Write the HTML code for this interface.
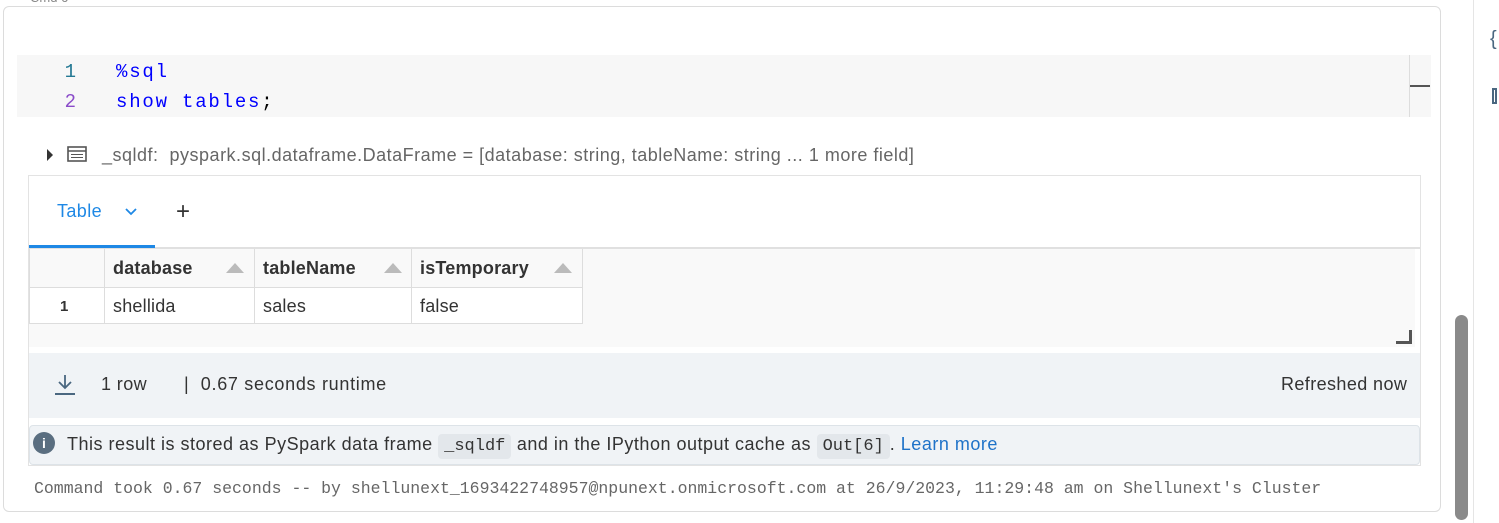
<!DOCTYPE html>
<html><head><meta charset="utf-8"><style>
*{margin:0;padding:0;box-sizing:border-box}
body{width:1499px;height:523px;background:#fff;position:relative;overflow:hidden;font-family:"Liberation Sans",sans-serif;color:#333}
.a{position:absolute}
.mono{font-family:"Liberation Mono",monospace;letter-spacing:0}
.cell{left:3px;top:6px;width:1438px;height:506px;border:1px solid #dcdcdc;border-radius:6px}
.code{left:17px;top:55px;width:1414px;height:62px;background:#f7f7f7}
.ln{font-size:19px;width:20px;text-align:right}
.ct{font-size:19px;letter-spacing:1.8px;color:#0000ff}
.res{left:28px;top:175px;width:1393px;height:291px;border:1px solid #e3e3e3}
.hc{position:absolute;top:249px;height:38px;border-right:1px solid #ddd;font-weight:bold;color:#333;font-size:18px;line-height:38px;padding-left:8px;letter-spacing:0.2px}
.rc{position:absolute;top:287px;height:37px;border-right:1px solid #ddd;border-top:1px solid #ddd;border-bottom:1px solid #ddd;font-size:18px;line-height:37px;padding-left:8px;background:#fff;color:#333;letter-spacing:0.2px}
.tri{position:absolute;top:14px;width:0;height:0;border-left:9px solid transparent;border-right:9px solid transparent;border-bottom:10px solid #bbb}
.s{letter-spacing:0.4px}
</style></head><body>
<div class="a" style="left:30px;top:-10px;font-size:13px;color:#888">Cmd 6</div>
<div class="a cell"></div>
<div class="a code"></div>
<div class="a" style="left:1409px;top:55px;width:1px;height:62px;background:#ddd"></div>
<div class="a" style="left:1410px;top:85px;width:20px;height:2px;background:#555"></div>
<div class="a mono ln" style="left:56px;top:61px;color:#237893">1</div>
<div class="a mono ln" style="left:56px;top:91px;color:#8a4bc9">2</div>
<div class="a mono ct" style="left:116px;top:61px;letter-spacing:1.8px">%sql</div>
<div class="a mono ct" style="left:116px;top:91px;letter-spacing:1.8px">show tables<span style="color:#000">;</span></div>

<div class="a" style="left:47px;top:149px;width:0;height:0;border-top:6px solid transparent;border-bottom:6px solid transparent;border-left:6px solid #333"></div>
<svg class="a" style="left:67px;top:146px" width="20" height="16"><rect x="1" y="1" width="18" height="14" fill="none" stroke="#555" stroke-width="1.6"/><line x1="1" y1="5" x2="19" y2="5" stroke="#555" stroke-width="1.6"/><line x1="4" y1="8.5" x2="16" y2="8.5" stroke="#555"/><line x1="4" y1="11.5" x2="16" y2="11.5" stroke="#555"/></svg>
<div class="a" style="left:102px;top:145px;font-size:18px;color:#666;white-space:nowrap;letter-spacing:0.5px">_sqldf:&nbsp; pyspark.sql.dataframe.DataFrame = [database: string, tableName: string ... 1 more field]</div>

<div class="a res"></div>
<div class="a s" style="left:57px;top:201px;font-size:18px;color:#1e88e5">Table</div>
<svg class="a" style="left:124px;top:207px" width="14" height="10"><path d="M2 2 L7 7 L12 2" fill="none" stroke="#1e88e5" stroke-width="1.8"/></svg>
<div class="a" style="left:176px;top:198px;font-size:24px;color:#333">+</div>
<div class="a" style="left:29px;top:247px;width:1391px;height:2px;background:#e0e0e0"></div>
<div class="a" style="left:29px;top:245px;width:126px;height:3px;background:#1e88e5"></div>
<div class="a" style="left:29px;top:249px;width:1386px;height:98px;background:#f9f9f9"></div>
<div class="hc" style="left:29px;width:76px;border-left:1px solid #ddd"></div>
<div class="hc" style="left:105px;width:150px">database<div class="tri" style="left:121px"></div></div>
<div class="hc" style="left:255px;width:157px">tableName<div class="tri" style="left:129px"></div></div>
<div class="hc" style="left:412px;width:171px">isTemporary<div class="tri" style="left:142px"></div></div>
<div class="rc" style="left:29px;width:76px;border-left:1px solid #ddd;font-weight:bold;font-size:15px;padding-left:30px">1</div>
<div class="rc" style="left:105px;width:150px">shellida</div>
<div class="rc" style="left:255px;width:157px">sales</div>
<div class="rc" style="left:412px;width:171px">false</div>
<div class="a" style="left:1396px;top:330px;width:16px;height:14px;border-right:3px solid #555;border-bottom:3px solid #555"></div>

<div class="a" style="left:29px;top:353px;width:1391px;height:65px;background:#f0f3f6"></div>
<svg class="a" style="left:54px;top:373px" width="22" height="24"><path d="M11 2 V15 M5 9 L11 15 L17 9" fill="none" stroke="#4a6780" stroke-width="1.8"/><line x1="1" y1="21" x2="21" y2="21" stroke="#4a6780" stroke-width="2"/></svg>
<div class="a s" style="left:101px;top:374px;font-size:18px;color:#333">1 row</div>
<div class="a s" style="left:184px;top:374px;font-size:18px;color:#333;letter-spacing:0.7px">|&nbsp; 0.67 seconds runtime</div>
<div class="a s" style="left:1281px;top:374px;font-size:18px;color:#333">Refreshed now</div>

<div class="a" style="left:29px;top:425px;width:1391px;height:40px;background:#f0f3f6;border:1px solid #dde3e8;border-radius:4px"></div>
<div class="a" style="left:33px;top:432px;width:22px;height:22px;border-radius:50%;background:#5a6e80;color:#fff;font-size:14px;font-weight:bold;text-align:center;line-height:22px">i</div>
<div class="a" style="left:67px;top:434px;font-size:18px;color:#333;white-space:nowrap;letter-spacing:0.5px">This result is stored as PySpark data frame <span class="mono" style="background:#e3e7eb;padding:3px 6px;border-radius:4px;font-size:17px">_sqldf</span> and in the IPython output cache as <span class="mono" style="background:#e3e7eb;padding:3px 6px;border-radius:4px;font-size:17px">Out[6]</span>. <span style="color:#1e72c8">Learn more</span></div>

<div class="a mono" style="left:34px;top:479px;font-size:16.5px;color:#666;white-space:nowrap">Command took 0.67 seconds -- by shellunext_1693422748957@npunext.onmicrosoft.com at 26/9/2023, 11:29:48 am on Shellunext's Cluster</div>

<div class="a" style="left:1473px;top:0;width:1px;height:523px;background:#e5e5e5"></div>
<div class="a" style="left:1455px;top:315px;width:13px;height:205px;border-radius:7px;background:#8a8a8a"></div>
<div class="a" style="left:1490px;top:28px;font-size:20px;color:#4a6780">{</div>
<div class="a" style="left:1492px;top:88px;width:5px;height:16px;border:2px solid #4a6780"></div>
</body></html>
